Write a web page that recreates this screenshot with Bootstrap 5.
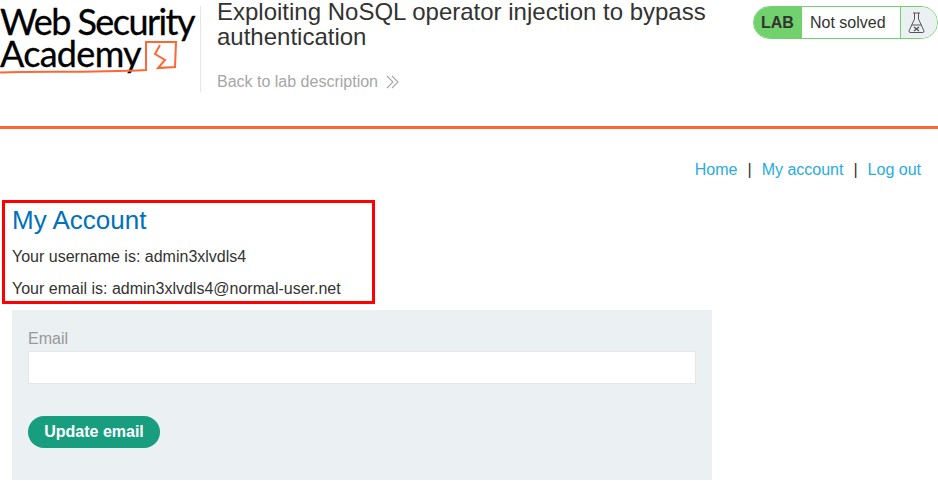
<!DOCTYPE html>
<html lang="en">
<head>
<meta charset="utf-8">
<title>My Account</title>
<link href="https://cdn.jsdelivr.net/npm/bootstrap@5.3.0/dist/css/bootstrap.min.css" rel="stylesheet">
<style>
html,body{height:485px;overflow:hidden;background:#fff}
body{font-family:"Liberation Sans",Arial,sans-serif;font-size:16px;color:#333332}
.lab-head{height:129px;border-bottom:3px solid #ff6633}
.logo-cell{width:201px;height:86px;margin-top:6px;border-right:1px solid #e6e6e6;position:relative;flex:none}
.logo-word{font-family:Lato,sans-serif;font-size:36px;line-height:32px;color:#000;letter-spacing:-1.55px;white-space:nowrap;-webkit-text-stroke:.3px #000;position:relative;top:-1px}
.logo-word.second-line{letter-spacing:-.7px}
.logo-art{position:absolute;left:0;top:0}
.title-cell{padding-left:16px;flex:1 1 auto;min-width:0}
.lab-title{font-size:24px;line-height:24.5px;font-weight:400;margin:0;color:#333332;width:520px}
.back-link{font-size:16px;color:#a6a6a6;text-decoration:none;display:inline-flex;align-items:center;gap:8px;margin-top:24px;line-height:18px}
.status-pill{width:185px;height:33px;margin:6px 0 0 0;border:1px solid #70d16d;border-radius:17px;overflow:hidden;flex:none}
.status-lab{width:48px;background:#70d16d;font-weight:700;font-size:16px;padding-left:7px}
.status-text{flex:1;background:#fff;font-size:16px;padding-left:8px;border-right:1px solid #70d16d}
.status-icon{width:36px;background:#ebf0f2;padding-right:6px}
.top-nav{padding:32px 17px 0 0;line-height:18px}
.top-nav a{color:#29abe2;text-decoration:none}
.top-nav span{margin:0 10px}
.red-frame{width:373px;height:104px;margin:21px 0 0 2px;border:3px solid #ff0000;padding:0 0 0 7px}
.red-frame h1{font-size:26px;line-height:30px;font-weight:400;color:#0071bc;margin:2px 0 0}
.red-frame p{line-height:18px;margin:14px 0 0;color:#333332}
.red-frame h1 + p{margin-top:13px}
.email-form{width:700px;height:170px;margin:6px 0 0 12px;background:#ebf0f2;padding:20px 16px 0}
.email-form label{display:block;color:#999;line-height:18px;margin-bottom:3px}
.email-input{display:block;width:100%;height:33px;border:1px solid #e6e6e6;background:#fff;border-radius:0;padding:0 8px}
.update-btn{display:block;margin-top:32px;width:132px;height:32px;border:0;border-radius:16px;background:#189d7f;color:#fff;font-weight:700;font-size:16px;padding:0}
</style>
</head>
<body>
<header class="lab-head d-flex">
  <div class="logo-cell">
    <div class="logo-word">Web Security</div>
    <div class="logo-word second-line">Academy</div>
    <svg class="logo-art" width="200" height="86" viewBox="0 0 200 86" fill="none" aria-hidden="true">
      <path d="M0 66.5 C40 65 90 67 146 64 L146 36 H176 L175 61 L158 62 L165 54 L155 48 L160 39" stroke="#ff6633" stroke-width="2"/>
    </svg>
  </div>
  <div class="title-cell">
    <h2 class="lab-title">Exploiting NoSQL operator injection to bypass authentication</h2>
    <a class="back-link" href="#">Back to lab description
      <svg width="13" height="14" viewBox="0 0 13 14" fill="none" stroke="#a6a6a6" stroke-width="1.1" aria-hidden="true"><path d="M1 1l6 6-6 6M6 1l6 6-6 6"/></svg>
    </a>
  </div>
  <div class="status-pill d-flex">
    <div class="status-lab d-flex align-items-center">LAB</div>
    <div class="status-text d-flex align-items-center">Not solved</div>
    <div class="status-icon d-flex align-items-center justify-content-center">
      <svg width="17" height="22" viewBox="0 0 17 22" fill="none" stroke="#555" stroke-width="1" aria-hidden="true"><path d="M5 1h7M6.5 1v6L1.2 18.5q-.7 2 1 2h12.6q1.7 0 1-2L10.5 7V1M4 13h9"/><path d="M6 15l5 4M11 15l-5 4" stroke-width="1.4"/></svg>
    </div>
  </div>
</header>
<nav class="top-nav text-end"><a href="#">Home</a><span>|</span><a href="#">My account</a><span>|</span><a href="#">Log out</a></nav>
<section class="red-frame">
  <h1>My Account</h1>
  <p>Your username is: admin3xlvdls4</p>
  <p>Your email is: admin3xlvdls4@normal-user.net</p>
</section>
<form class="email-form">
  <label for="em">Email</label>
  <input id="em" class="email-input" type="email">
  <button class="update-btn" type="button">Update email</button>
</form>
<script src="https://cdn.jsdelivr.net/npm/bootstrap@5.3.0/dist/js/bootstrap.bundle.min.js"></script>
</body>
</html>
